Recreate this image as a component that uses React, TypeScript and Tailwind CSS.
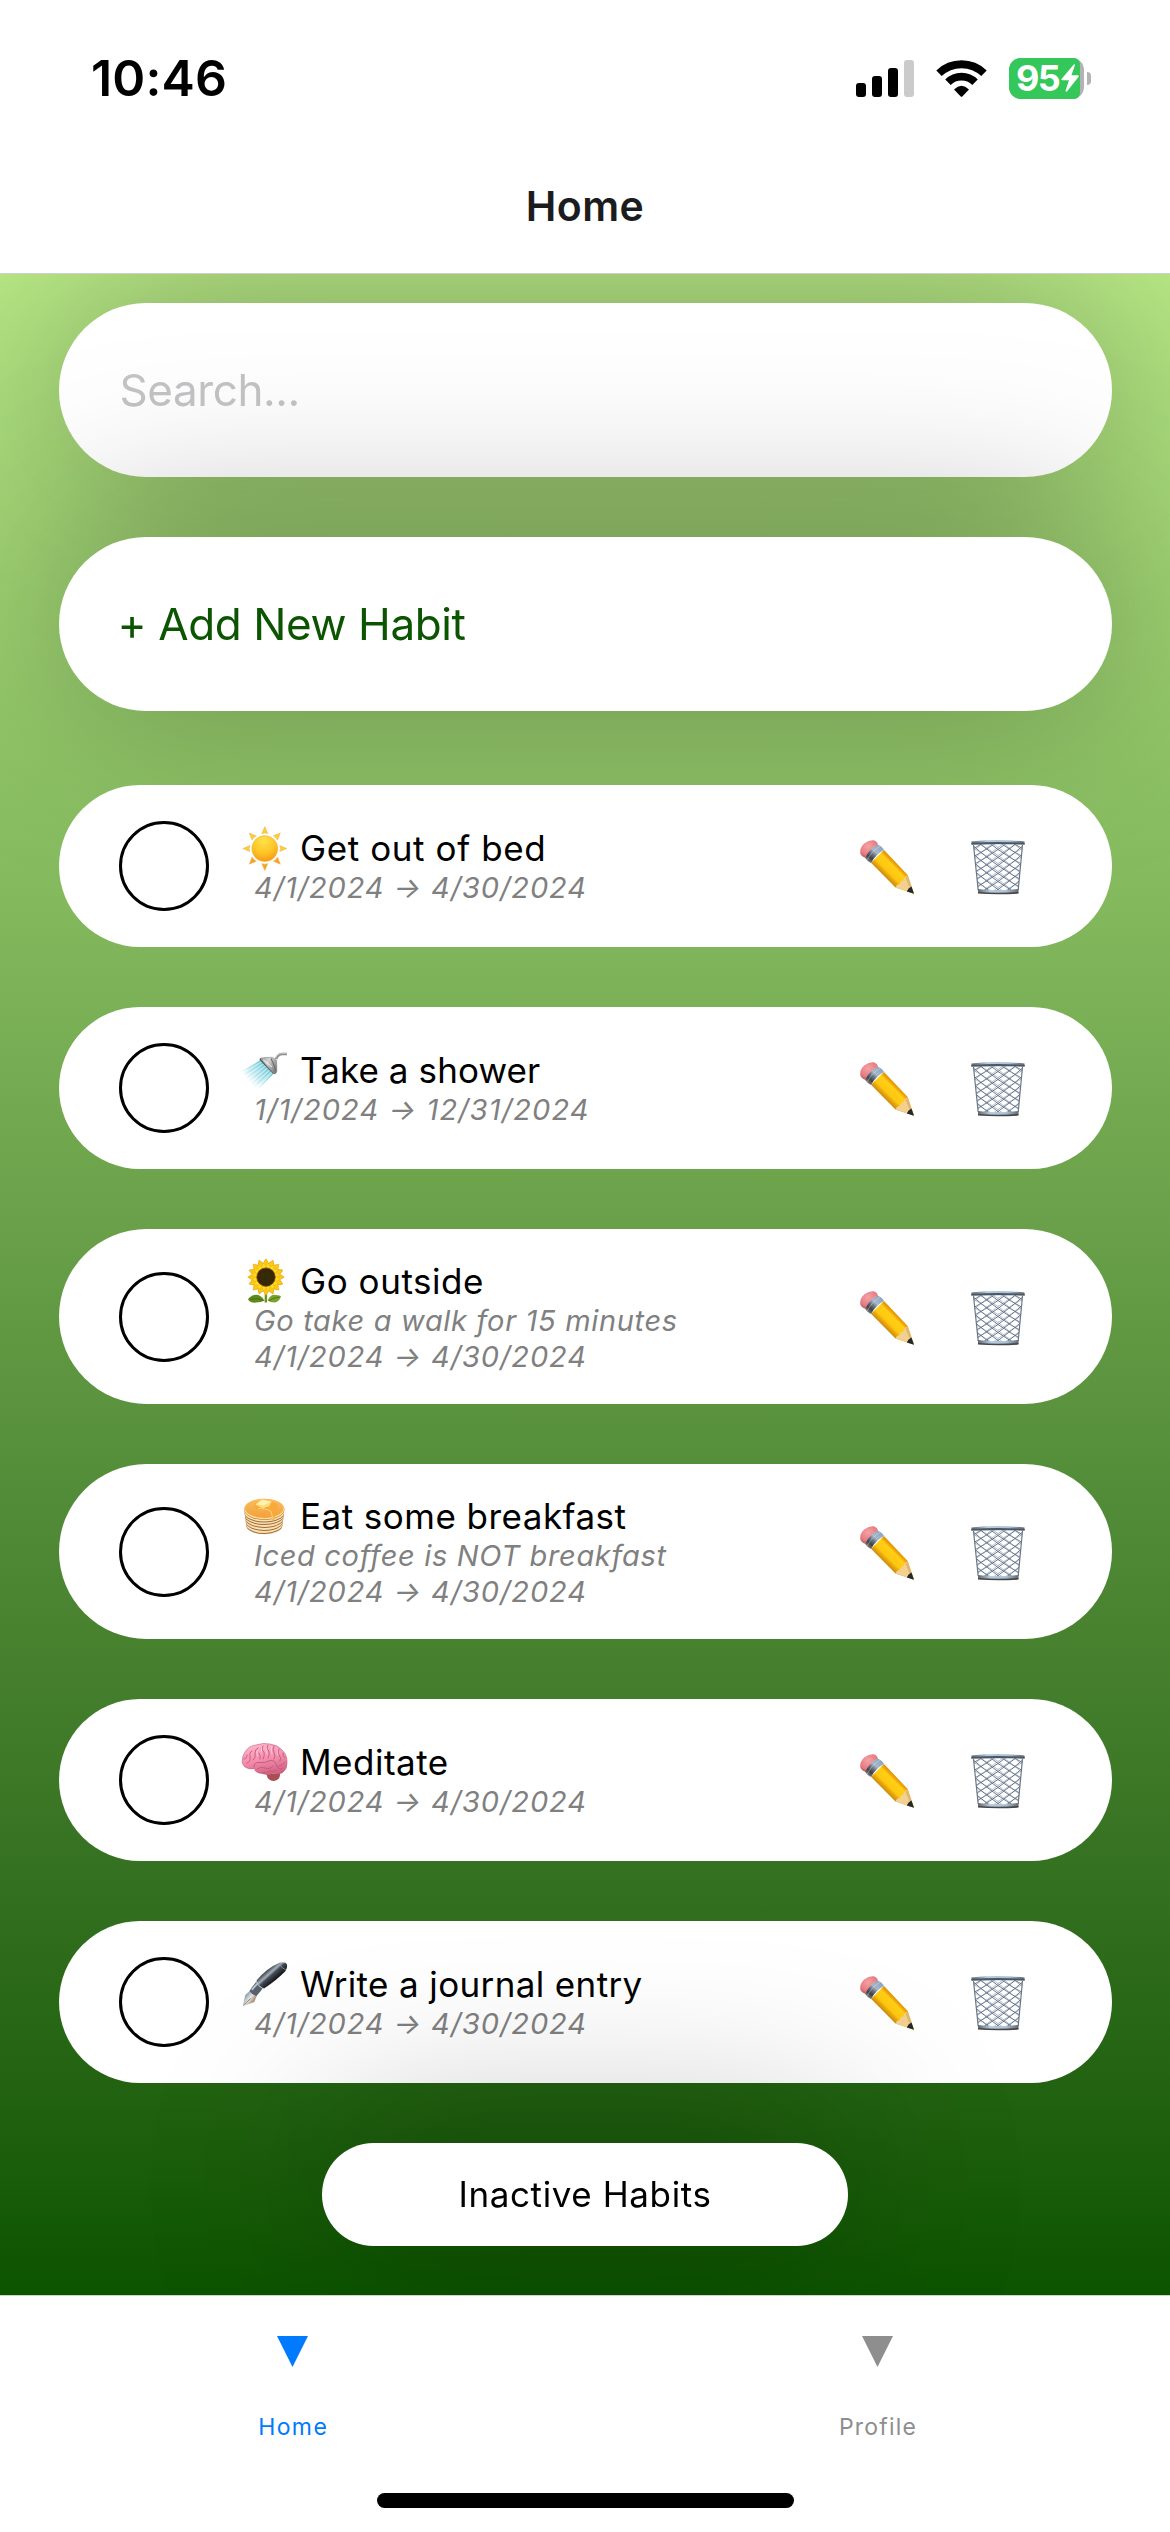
import React from "react";

const EMOJI = "block h-[44px] w-[44px] shrink-0 overflow-visible";

function SunIcon() {
  return (
    <svg viewBox="0 0 44 44" className={EMOJI} aria-hidden="true">
      <defs>
        <radialGradient id="sun-disc" cx="0.45" cy="0.2" r="0.85">
          <stop offset="0" stopColor="#ffe24a" />
          <stop offset="0.55" stopColor="#fdc526" />
          <stop offset="1" stopColor="#f6930f" />
        </radialGradient>
      </defs>
      <g transform="translate(21.8 22.6)">
        {[0, 45, 90, 135, 180, 225, 270, 315].map((a) => (
          <path
            key={a}
            d="M0 -22 L3 -15 Q0 -16.2 -3 -15 Z"
            transform={`rotate(${a})`}
            fill={a > 90 && a < 270 ? "#f8a31c" : "#fccf2e"}
            stroke="#e9b25a"
            strokeWidth="0.5"
          />
        ))}
        <circle r="13" fill="url(#sun-disc)" stroke="#eeb040" strokeWidth="0.5" />
      </g>
    </svg>
  );
}

function ShowerIcon() {
  return (
    <svg viewBox="0 0 44 44" className={EMOJI} aria-hidden="true">
      <defs>
        <linearGradient id="shower-water" gradientUnits="userSpaceOnUse" x1="24" y1="18" x2="6" y2="36">
          <stop offset="0" stopColor="#5cc4d6" />
          <stop offset="0.6" stopColor="#a6dfea" stopOpacity="0.8" />
          <stop offset="1" stopColor="#d9f1f6" stopOpacity="0" />
        </linearGradient>
        <linearGradient id="shower-head" x1="0" y1="0" x2="1" y2="0.6">
          <stop offset="0" stopColor="#8b8b8b" />
          <stop offset="0.45" stopColor="#d4d4d4" />
          <stop offset="1" stopColor="#808080" />
        </linearGradient>
      </defs>
      <path d="M17 12 L30.5 25.5 L12 40 L0.5 24 Z" fill="url(#shower-water)" opacity="0.55" />
      <g stroke="url(#shower-water)" strokeWidth="1.1">
        <path d="M17.5 13 L-1 23.5" />
        <path d="M19.5 15 L0 27.5" />
        <path d="M21.5 17 L1.5 31.5" />
        <path d="M23.5 19 L4 35" />
        <path d="M25.5 21 L6.5 38" />
        <path d="M27.5 23 L10 40" />
        <path d="M30 25.5 L15 40.5" />
      </g>
      <path d="M44 6 L39.5 6 Q35 6 33 11" fill="none" stroke="#8f8f8f" strokeWidth="2.6" />
      <path d="M44 5.4 L39.5 5.4 Q34.5 5.6 32.6 10" fill="none" stroke="#d0d0d0" strokeWidth="0.8" />
      <path d="M17 10.3 Q24 9 29.5 9.3 L33.5 12.2 Q34 18 33.8 23.8 Q33 26.3 31 26 Z" fill="url(#shower-head)" stroke="#7c7c7c" strokeWidth="0.5" />
      <path d="M17 10.3 L31 26 L30 25.8 L16.6 12 Z" fill="#555" />
      <path d="M28 10.5 Q31 16 32.8 23" fill="none" stroke="#6b6b6b" strokeWidth="1.1" />
      <path d="M20 11.5 L29 19" stroke="#efefef" strokeWidth="1" />
    </svg>
  );
}

function SunflowerIcon() {
  const petals = Array.from({ length: 16 }, (_, i) => i * 22.5);
  return (
    <svg viewBox="0 0 44 44" className={EMOJI} aria-hidden="true">
      <path d="M23 31 L22.8 43.5" stroke="#6d8f1f" strokeWidth="2.4" />
      <path d="M21.5 41.5 Q17 34.5 11 36 Q6.5 37.5 5 40.5 Q8 44.3 13 43.6 Q18 43.5 21.5 41.5 Z" fill="#5f8a1d" />
      <path d="M24.5 41.5 Q28 34.5 33 36 Q37 36 38 37.5 Q36 43 31.5 43.6 Q27 43.5 24.5 41.5 Z" fill="#79a32a" />
      <path d="M7 40.5 Q14 38 20.5 41.5 M26 41.5 Q31 38.5 36.5 38" stroke="#42660f" strokeWidth="0.7" fill="none" />
      <g transform="translate(23 18.1)">
        {petals.map((a) => (
          <path key={`o${a}`} d="M-3.4 -8 Q-4 -14 0 -18.3 Q4 -14 3.4 -8 Z" transform={`rotate(${a})`} fill="#fbc813" stroke="#e09a0a" strokeWidth="0.5" />
        ))}
        {petals.map((a) => (
          <path key={`i${a}`} d="M-2.5 -7 Q-3 -11 0 -14.5 Q3 -11 2.5 -7 Z" transform={`rotate(${a + 11.25})`} fill="#ffdc23" stroke="#eda90f" strokeWidth="0.4" />
        ))}
        <circle r="9.2" fill="#3a2507" stroke="#6a4509" strokeWidth="0.8" />
        <circle r="4.6" fill="#2f2c08" stroke="#4c3208" strokeWidth="1" strokeDasharray="1 1" />
      </g>
    </svg>
  );
}

function PancakesIcon() {
  return (
    <svg viewBox="0 0 44 44" className={EMOJI} aria-hidden="true">
      <defs>
        <linearGradient id="pancake-top" x1="0" y1="0" x2="0" y2="1">
          <stop offset="0" stopColor="#f9bf5b" />
          <stop offset="1" stopColor="#f3a03c" />
        </linearGradient>
      </defs>
      <ellipse cx="21.5" cy="33" rx="17.5" ry="7.5" fill="#e9e4df" />
      {[30, 27, 24, 21, 18.5].map((y, i) => (
        <g key={y}>
          <ellipse cx="21.3" cy={y + 1} rx={18.2 + i * 0.4} ry="9" fill="#a5692f" />
          <ellipse cx="21.3" cy={y} rx={18.2 + i * 0.4} ry="9" fill="#f8e3b8" />
        </g>
      ))}
      <ellipse cx="21.3" cy="15.6" rx="20.2" ry="10.4" fill="#c98238" />
      <ellipse cx="21.3" cy="15" rx="20" ry="10.2" fill="#fbe0a4" />
      <ellipse cx="21.3" cy="14.3" rx="19.3" ry="9.6" fill="url(#pancake-top)" />
      <path d="M13 8.5 Q9 13 15 15.5 Q24 15 27 18 Q29 20 29 25.5 Q30.5 27 31.5 25.5 L31.5 18.5 Q37 14 33 9 Q24 5 13 8.5 Z" fill="#f8a936" opacity="0.8" />
      <path d="M15 14.5 Q24 14.5 28 17.5 L30 25" fill="none" stroke="#ffd98a" strokeWidth="0.8" />
      <path d="M12.5 10.5 L19 5.8 L28.5 7.5 L26.5 12 L19.5 14.5 Z" fill="#ffdc7a" />
      <path d="M12.5 10.5 L19 5.8 L28.5 7.5 L21 11.2 Z" fill="#fff0b5" />
    </svg>
  );
}

function BrainIcon() {
  return (
    <svg viewBox="0 0 44 44" className={EMOJI} aria-hidden="true">
      <defs>
        <linearGradient id="brain-fill" x1="0.3" y1="0" x2="0.6" y2="1">
          <stop offset="0" stopColor="#ffb6cb" />
          <stop offset="0.5" stopColor="#f58fae" />
          <stop offset="1" stopColor="#d0607f" />
        </linearGradient>
      </defs>
      <path d="M23.5 34 Q24.5 41 31 41 Q37.5 40 37 33 Z" fill="#a94e52" />
      <path d="M-0.8 22 Q-1 16 2 12 Q6 5.5 13 5 Q20 2.5 27 4 Q35 5 39 10 Q44.5 15 44 23 Q44.5 29 39 33 Q35 34.5 31 33 Q25 36 19 33.5 Q12 33 11.5 28.5 Q6 30 2 27 Q-0.5 25 -0.8 22 Z" fill="url(#brain-fill)" stroke="#c35c7d" strokeWidth="0.6" />
      <g fill="none" stroke="#c4577c" strokeWidth="0.9" strokeLinecap="round">
        <path d="M1 19 Q4 19 4 15 M4 23 Q8 22 7 17 Q6 12 9 11" />
        <path d="M11 27 Q11 22 16 22.5 Q22 23.5 27 20.5 Q31 20 33 23" />
        <path d="M10 20 Q13 18 12 13 Q12 9 15 8 M17 19 Q18 16 16 13" />
        <path d="M20 6 Q18 10 21 12 Q22 16 20 19 M25 5 Q23 9 26 11 Q27 15 25 18" />
        <path d="M31 6 Q29 10 31 13 Q33 17 31 19 M36 9 Q34 12 36 15 Q39 18 37 21" />
        <path d="M40 13 Q39 16 42 18 M36 26 Q40 25 42 22 M33 24 Q34 29 39 29" />
        <path d="M14 29 Q18 26 22 28 Q27 30 30 26 M19 33 Q24 33 26 31 Q30 33 33 30" />
      </g>
      <g fill="none" stroke="#ffd0de" strokeWidth="1" strokeLinecap="round" opacity="0.8">
        <path d="M14 11 Q13.5 14 14.5 16 M18.5 8 L18.5 11 M23 8 Q23 12 24 14 M28.5 7 Q28 11 29 14 M34 10 Q34 13 35 15" />
      </g>
    </svg>
  );
}

function PenIcon() {
  return (
    <svg viewBox="0 0 44 44" className={EMOJI} aria-hidden="true">
      <defs>
        <linearGradient id="pen-barrel" gradientUnits="userSpaceOnUse" x1="23" y1="10" x2="31" y2="19">
          <stop offset="0" stopColor="#4b525a" />
          <stop offset="0.3" stopColor="#a7b1bb" />
          <stop offset="0.5" stopColor="#454c55" />
          <stop offset="1" stopColor="#15181c" />
        </linearGradient>
        <linearGradient id="pen-nib" gradientUnits="userSpaceOnUse" x1="3" y1="33" x2="11" y2="39">
          <stop offset="0" stopColor="#7fa3bd" />
          <stop offset="0.5" stopColor="#eee6dc" />
          <stop offset="1" stopColor="#a08a78" />
        </linearGradient>
      </defs>
      <path d="M0.3 43.5 L2.5 33 L7 29 L13.5 34 L11 40 Z" fill="url(#pen-nib)" stroke="#9a958f" strokeWidth="0.4" />
      <path d="M0.8 43 L7.5 36.5" stroke="#77706a" strokeWidth="0.8" />
      <path d="M6.5 29 Q10 23 16 17 L22.5 22.5 Q18 29 13.5 34 Q9 33 6.5 29 Z" fill="#59626c" />
      <path d="M9 28 Q12 23.5 17 19.5" stroke="#b9c5d0" strokeWidth="1.8" fill="none" />
      <path d="M13.5 18.5 Q24 6 37 0.6 Q42 -0.6 43.8 2 Q44.8 5 42.5 9 Q34 18 21 26.5 Q16 24 13.5 18.5 Z" fill="url(#pen-barrel)" />
      <path d="M13 19 Q15 24.5 20.5 27" stroke="#c3cad1" strokeWidth="1" fill="none" />
      <path d="M36.5 1.8 Q38 6 43 8" stroke="#8b949e" strokeWidth="0.8" fill="none" />
    </svg>
  );
}

function PencilIcon() {
  return (
    <svg viewBox="0 0 54 54" className="block h-[54px] w-[54px] overflow-visible" aria-hidden="true">
      <defs>
        <linearGradient id="pencil-body" gradientUnits="userSpaceOnUse" x1="36" y1="22" x2="23" y2="35">
          <stop offset="0" stopColor="#d98e06" />
          <stop offset="0.16" stopColor="#f3ab0b" />
          <stop offset="0.26" stopColor="#ffcf16" />
          <stop offset="0.68" stopColor="#ffc70f" />
          <stop offset="0.76" stopColor="#f0b10c" />
          <stop offset="1" stopColor="#c98a0d" />
        </linearGradient>
        <linearGradient id="pencil-ferrule" gradientUnits="userSpaceOnUse" x1="21" y1="6" x2="8" y2="21">
          <stop offset="0" stopColor="#8ba3ba" />
          <stop offset="0.4" stopColor="#a5bacd" />
          <stop offset="0.58" stopColor="#6d7580" />
          <stop offset="0.8" stopColor="#3d4045" />
          <stop offset="1" stopColor="#777b80" />
        </linearGradient>
        <radialGradient id="pencil-eraser" cx="0.45" cy="0.35" r="0.7">
          <stop offset="0" stopColor="#f5a2a5" />
          <stop offset="0.7" stopColor="#e77b82" />
          <stop offset="1" stopColor="#b9525c" />
        </radialGradient>
      </defs>
      <path d="M24 10 L47.7 35 L54 53.8 L35.5 47.5 L11 22.8 Z" fill="url(#pencil-body)" />
      <path d="M47.7 35.5 L54 53.8 L35.5 47.5 Q37 43.5 40 44 Q40 40.5 43.5 40.5 Q44 36.5 47.7 35.5 Z" fill="#f2d08f" />
      <path d="M47.7 35.5 L54 53.8 L50 49 Q47 41 45.5 38 Z" fill="#d3a55c" opacity="0.6" />
      <path d="M51.5 46.5 L54 53.8 L46.8 51.4 Q48 48 51.5 46.5 Z" fill="#26282c" />
      <path d="M17.5 4.5 Q22 6 24 10 Q16 14 11 23 Q7 21 4.8 17.5 Q9 8.5 17.5 4.5 Z" fill="url(#pencil-ferrule)" />
      <path d="M20 6.3 Q12 10.5 7.2 20" stroke="#e0e8ef" strokeWidth="0.7" fill="none" opacity="0.6" />
      <path d="M0.2 13 Q-0.2 7 4.5 3.2 Q9.5 -0.5 14 0.3 Q17.5 1.8 18 4.6 Q9.5 8.5 5.2 17.7 Q1.5 16.8 0.2 13 Z" fill="url(#pencil-eraser)" />
    </svg>
  );
}

function TrashIcon() {
  const steps = Array.from({ length: 14 }, (_, i) => -36 + i * 8);
  return (
    <svg viewBox="0 0 54 54" className="block h-[54px] w-[54px] overflow-visible" aria-hidden="true">
      <defs>
        <clipPath id="basket-clip">
          <path d="M2.5 4 L51.5 4 L47.3 51 L7 51 Z" />
        </clipPath>
        <linearGradient id="basket-rim" x1="0" y1="0" x2="1" y2="0">
          <stop offset="0" stopColor="#5d6670" />
          <stop offset="0.3" stopColor="#b4cbe0" />
          <stop offset="0.7" stopColor="#a9c2d8" />
          <stop offset="1" stopColor="#5d6670" />
        </linearGradient>
      </defs>
      <g clipPath="url(#basket-clip)" fill="none">
        <g stroke="#9db1ca" strokeWidth="0.8">
          {steps.map((y) => (
            <path key={y} d={`M0 ${y + 3} Q27 ${y + 17} 54 ${y + 41}`} />
          ))}
          {steps.map((y) => (
            <path key={`r${y}`} d={`M54 ${y + 3} Q27 ${y + 17} 0 ${y + 41}`} />
          ))}
        </g>
        <g stroke="#626d7d" strokeWidth="0.9">
          {steps.map((y) => (
            <path key={y} d={`M0 ${y} Q27 ${y + 24} 54 ${y + 38}`} />
          ))}
          {steps.map((y) => (
            <path key={`r${y}`} d={`M54 ${y} Q27 ${y + 24} 0 ${y + 38}`} />
          ))}
        </g>
      </g>
      <path d="M2.5 5 L7.2 50 M51.5 5 L47.2 50" stroke="#6b7787" strokeWidth="1.2" />
      <path d="M7 49 Q27 51.5 47.5 49 L47.5 53 Q27 54.5 7 53 Z" fill="url(#basket-rim)" />
      <path d="M7 52.8 Q27 54.2 47.5 52.8" stroke="#4c4645" strokeWidth="1.6" fill="none" />
      <path d="M0.5 1.5 Q27 -1.4 53.5 1.5 L53.5 4 Q27 5 0.5 4 Z" fill="url(#basket-rim)" />
      <path d="M0.3 3.8 Q27 2.2 53.7 3.8" stroke="#4d5561" strokeWidth="1.8" fill="none" />
    </svg>
  );
}

function SignalIcon() {
  return (
    <svg viewBox="0 0 58 37" className="h-[37px] w-[58px]" aria-hidden="true">
      <rect x="0" y="23" width="10" height="14" rx="3" />
      <rect x="16" y="16" width="10" height="21" rx="3" />
      <rect x="32" y="8" width="10" height="29" rx="3" />
      <rect x="48" y="0" width="10" height="37" rx="3" fill="#cbcbcb" />
    </svg>
  );
}

function WifiIcon() {
  return (
    <svg viewBox="0 0 51 37" className="ml-[22px] h-[37px] w-[51px]" aria-hidden="true">
      <path d="M3 13.3 A32.5 32.5 0 0 1 48 13.3" fill="none" stroke="#000" strokeWidth="7.8" />
      <path d="M12 22.3 A19 19 0 0 1 39 22.3" fill="none" stroke="#000" strokeWidth="7.8" />
      <path d="M18 29.4 Q25.5 22 33 29.4 L26.5 36.3 Q25.5 37.3 24.5 36.3 Z" />
    </svg>
  );
}

function Battery() {
  return (
    <div className="ml-[22px] flex items-center gap-[3px]">
      <div className="flex h-[41px] w-[75px] rounded-[12px] bg-[#b3b3b3]">
        <div className="flex w-[71px] items-center rounded-l-[12px] rounded-r-[6px] bg-[#34c759] pl-[7px]">
          <span className="w-[45px] text-[36px] leading-[41px] font-bold tracking-[-1.6px] whitespace-nowrap text-white">95</span>
          <svg viewBox="0 0 18 28" className="h-[28px] w-[18px] shrink-0" aria-hidden="true">
            <path d="M13 0.3 L0.5 15 Q0 16.2 1.2 16.2 L8 16.2 L4.5 26.8 Q5 28.3 6.2 27.3 L17.6 12.8 Q18 11.5 16.8 11.3 L10.4 11.3 L14 1 Q14 0 13 0.3 Z" fill="#fff" />
          </svg>
        </div>
      </div>
      <div className="h-[13px] w-[4px] rounded-r-full bg-[#b3b3b3]" />
    </div>
  );
}

type Habit = {
  icon: React.ReactNode;
  title: string;
  titleTracking: string;
  note?: string;
  dates: string;
  datesTracking: string;
};

const APRIL = { dates: "4/1/2024 → 4/30/2024", datesTracking: "tracking-[0.88px]" };

const habits: Habit[] = [
  { icon: <SunIcon />, title: "Get out of bed", titleTracking: "tracking-[0.6px]", ...APRIL },
  {
    icon: <ShowerIcon />,
    title: "Take a shower",
    titleTracking: "tracking-[0.1px]",
    dates: "1/1/2024 → 12/31/2024",
    datesTracking: "tracking-[1.1px]",
  },
  { icon: <SunflowerIcon />, title: "Go outside", titleTracking: "tracking-[0.55px]", note: "Go take a walk for 15 minutes", ...APRIL },
  { icon: <PancakesIcon />, title: "Eat some breakfast", titleTracking: "tracking-[0.47px]", note: "Iced coffee is NOT breakfast", ...APRIL },
  { icon: <BrainIcon />, title: "Meditate", titleTracking: "tracking-[0.5px]", ...APRIL },
  { icon: <PenIcon />, title: "Write a journal entry", titleTracking: "tracking-[0.37px]", ...APRIL },
];

function HabitRow({ habit }: { habit: Habit }) {
  return (
    <div
      className={`flex w-[1053px] items-center rounded-[90px] bg-white pr-[87px] pl-[60px] ${habit.note ? "h-[175px]" : "h-[162px]"}`}
    >
      <button aria-label={`Complete ${habit.title}`} className="h-[90px] w-[90px] shrink-0 rounded-full border-[3px] border-black" />
      <div className="ml-[34px] flex grow flex-col">
        <div className="flex h-[42px] items-center gap-[13.5px]">
          {habit.icon}
          <span className={`text-[35px] leading-[42px] whitespace-nowrap text-black ${habit.titleTracking}`}>{habit.title}</span>
        </div>
        <div className="mt-[1px] -mb-[1px] pl-[11.5px] text-[29px] leading-[36px] whitespace-nowrap text-[#808080] italic">
          {habit.note && <div className="tracking-[0.67px]">{habit.note}</div>}
          <div className={habit.datesTracking}>{habit.dates}</div>
        </div>
      </div>
      <div className="mt-[2px] flex gap-[57px]">
        <button aria-label="Edit">
          <PencilIcon />
        </button>
        <button aria-label="Delete">
          <TrashIcon />
        </button>
      </div>
    </div>
  );
}

function Tab({ label, active }: { label: string; active?: boolean }) {
  return (
    <div className={`flex flex-1 flex-col items-center pt-[40px] ${active ? "text-[#007aff]" : "text-[#8e8e8f]"}`}>
      <svg viewBox="0 0 31 31" className="block h-[31px] w-[31px] fill-current" aria-hidden="true">
        <path d="M0 0 L31 0 L15.5 31 Z" />
      </svg>
      <span
        className={`mt-[45px] text-[23px] leading-[30px] font-normal ${active ? "pl-[1.4px] tracking-[1.4px]" : "pl-[1.2px] tracking-[1.2px]"}`}
      >
        {label}
      </span>
    </div>
  );
}

export default function App() {
  return (
    <div className="flex h-[2532px] w-[1170px] flex-col overflow-hidden bg-white font-['Inter',sans-serif]">
      <header className="h-[274px] shrink-0 border-b border-[#cfcfcf] bg-white">
        <div className="flex h-[156px] items-center justify-between pr-[79px] pl-[91px]">
          <span className="text-[50px] leading-[60px] font-semibold tracking-[0.16px] text-black">10:46</span>
          <div className="flex items-center">
            <SignalIcon />
            <WifiIcon />
            <Battery />
          </div>
        </div>
        <h1 className="text-center text-[41px] leading-[100px] font-semibold tracking-[0.4px] text-[#1c1c1e]">Home</h1>
      </header>

      <main className="flex h-[2021px] shrink-0 flex-col items-center overflow-hidden bg-linear-to-b from-[#b8e986] to-[#0b5400] pt-[29px]">
        <div className="flex h-[174px] w-[1053px] shrink-0 items-center rounded-[90px] bg-white pl-[61px] text-[44px] tracking-[-0.42px] text-[#c4c4c6] drop-shadow-[0_-8px_90px_rgba(0,0,0,0.3)]">
          Search...
        </div>
        <div className="mt-[60px] flex h-[174px] w-[1053px] shrink-0 items-center rounded-[90px] bg-white pl-[59px] text-[44px] tracking-[-0.39px] text-[#0b5400] drop-shadow-[0_-8px_90px_rgba(0,0,0,0.3)]">
          + Add New Habit
        </div>
        {/* Positioned so the cards above cast no shadow onto the list. */}
        <div className="relative mt-[74px] flex shrink-0 flex-col gap-[60px]">
          {habits.map((h) => (
            <HabitRow key={h.title} habit={h} />
          ))}
        </div>
        <div className="mt-[60px] flex h-[103px] w-[526px] shrink-0 items-center justify-center rounded-[60px] bg-white text-[35px] tracking-[0.6px] text-black drop-shadow-[0_-8px_90px_rgba(0,0,0,0.33)]">
          Inactive Habits
        </div>
      </main>

      <nav className="flex grow flex-col items-center border-t border-[#cfd4cc] bg-white">
        <div className="flex w-full">
          <Tab label="Home" active />
          <Tab label="Profile" />
        </div>
        <div className="mt-[51px] h-[15px] w-[417px] rounded-full bg-black" />
      </nav>
    </div>
  );
}
